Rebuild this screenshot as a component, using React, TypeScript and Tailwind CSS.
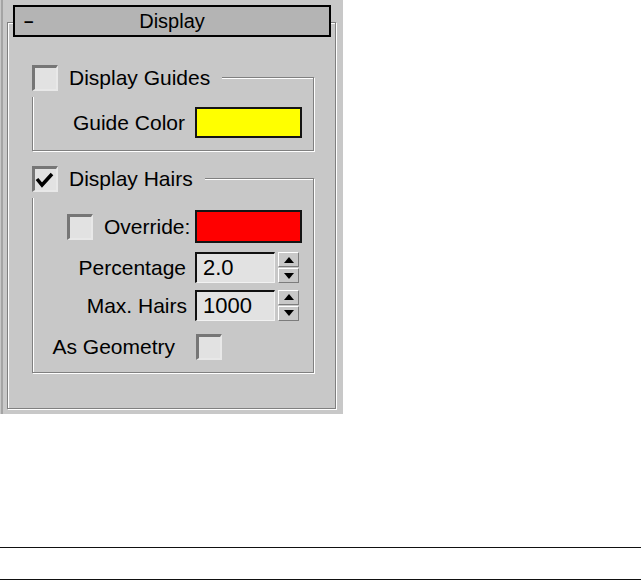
function CheckBox({ checked = false }: { checked?: boolean }) {
  return (
    <span className="flex h-[26px] w-[26px] shrink-0 items-start justify-start border-t-[3px] border-l-[3px] border-r-2 border-b-2 border-t-[#767676] border-l-[#767676] border-r-[#e8e8e8] border-b-[#e8e8e8] bg-[#e2e2e2]">
      {checked && (
        <svg width="21" height="21" viewBox="0 0 21 21">
          <polyline points="2,10 7,16 17,5" fill="none" stroke="#000" strokeWidth="3.5" />
        </svg>
      )}
    </span>
  );
}

function Swatch({ color }: { color: string }) {
  return <span className={`block w-[107px] border-2 border-[#141414] ${color}`} />;
}

function Spinner({ value }: { value: string }) {
  return (
    <div className="flex h-[31px] items-stretch">
      <div className="flex w-[80px] items-center border-t-2 border-l-2 border-r border-b border-t-[#111] border-l-[#111] border-r-[#f2f2f2] border-b-[#f2f2f2] bg-[#e2e2e2] pl-[6px] text-[22px] leading-none">
        {value}
      </div>
      <div className="ml-[3px] flex w-[21px] flex-col">
        <div className="flex h-[15px] items-center justify-center border-t border-l border-r border-b border-t-white border-l-white border-r-[#7c7c7c] border-b-[#7c7c7c] bg-[#c8c8c8]">
          <svg width="10" height="6" viewBox="0 0 10 6">
            <polygon points="5,0 10,6 0,6" fill="#000" />
          </svg>
        </div>
        <div className="mt-px flex h-[15px] items-center justify-center border-t border-l border-r border-b border-t-white border-l-white border-r-[#7c7c7c] border-b-[#7c7c7c] bg-[#c8c8c8]">
          <svg width="10" height="6" viewBox="0 0 10 6">
            <polygon points="0,0 10,0 5,6" fill="#000" />
          </svg>
        </div>
      </div>
    </div>
  );
}

export default function App() {
  const etched = "border border-[#808080] shadow-[inset_1px_1px_0_#fff,1px_1px_0_#fff]";

  return (
    <div className="flex h-[580px] w-[641px] flex-col bg-white font-['Liberation_Sans',Arial,sans-serif] text-[21px] text-black">
      <div className="h-[414px] w-[343px] bg-[#c8c8c8] pl-px">
        <div className="h-full border-l-2 border-l-[#a4a4a4] pt-[5px]">
          {/* rollout title */}
          <div className="relative z-10 ml-[10px] grid h-[32px] w-[318px] grid-cols-[1fr_auto_1fr] items-center border-2 border-black bg-[#b4b4b4] text-[20px] leading-none">
            <span className="pl-[9px] text-[17px] font-bold">–</span>
            <span className="pb-px">Display</span>
            <span />
          </div>

          <div className={`ml-[4px] mt-[-15px] h-[387px] w-[329px] ${etched}`}>
            {/* Display Guides */}
            <div className={`ml-[24px] mt-[54px] h-[74px] w-[282px] ${etched}`}>
              <div className="-ml-px -mt-[13px] flex w-fit items-center gap-[11px] bg-[#c8c8c8] pb-[6px] pr-[12px]">
                <CheckBox />
                <span className="leading-[26px]">Display Guides</span>
              </div>
              <div className="mt-[10px] flex items-center justify-end gap-[10px] pr-[11px]">
                <span>Guide Color</span>
                <Swatch color="h-[31px] bg-[#ffff00]" />
              </div>
            </div>

            {/* Display Hairs */}
            <div className={`ml-[24px] mt-[27px] h-[195px] w-[282px] ${etched}`}>
              <div className="-ml-px -mt-[13px] flex w-fit items-center gap-[11px] bg-[#c8c8c8] pb-[6px] pr-[12px]">
                <CheckBox checked />
                <span className="leading-[26px]">Display Hairs</span>
              </div>
              <div className="mt-[12px] flex items-center pl-[34px] pr-[11px]">
                <CheckBox />
                <span className="ml-[11px]">Override:</span>
                <span className="ml-auto">
                  <Swatch color="h-[33px] bg-[#ff0000]" />
                </span>
              </div>
              <div className="mt-[9px] flex items-center justify-end gap-[9px] pr-[14px]">
                <span>Percentage</span>
                <Spinner value="2.0" />
              </div>
              <div className="mt-[6px] flex items-center justify-end gap-[8px] pr-[14px]">
                <span>Max. Hairs</span>
                <Spinner value="1000" />
              </div>
              <div className="mt-[10px] flex items-center justify-end gap-[21px] pr-[91px]">
                <span>As Geometry</span>
                <CheckBox />
              </div>
            </div>
          </div>
        </div>
      </div>

      <div className="mt-[133px] h-px w-full bg-[#111]" />
      <div className="mt-[31px] h-px w-full bg-[#111]" />
    </div>
  );
}
